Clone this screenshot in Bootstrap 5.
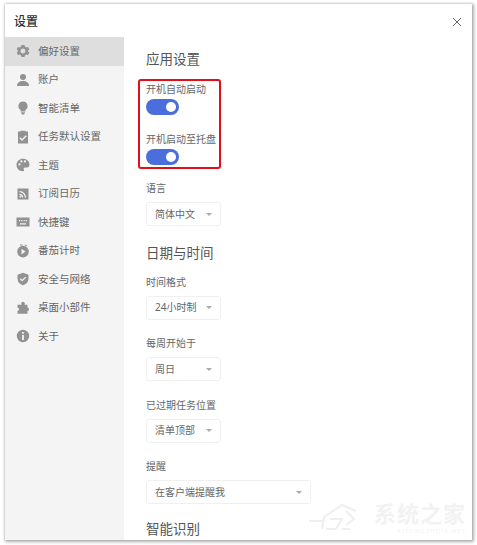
<!DOCTYPE html>
<html lang="zh">
<head>
    <meta charset="UTF-8">
    <meta name="viewport" content="width=device-width, initial-scale=1.0">
    <title>设置</title>
    <link href="https://cdn.jsdelivr.net/npm/bootstrap@5.3.0/dist/css/bootstrap.min.css" rel="stylesheet">
    <style>
        html, body { height: 100%; }
        body {
            background-color: #fff;
            font-family: "Noto Sans", "Noto Sans CJK SC", sans-serif;
            overflow: hidden;
            padding: 4px 5px 5px 5px;
        }
        .settings-win {
            height: 536px;
            background: #fff;
            box-shadow: 1px 1px 3px 1px rgba(0, 0, 0, 0.3), 0 0 2px rgba(0, 0, 0, 0.15);
            overflow: hidden;
            position: relative;
        }
        .win-head {
            height: 33px;
            padding-left: 9px;
            padding-right: 10px;
            padding-top: 2px;
        }
        .win-title { font-size: 12px; color: #333; font-weight: 500; }
        .win-body { height: 503px; }
        .side {
            width: 119px;
            background: #f4f4f4;
            flex-shrink: 0;
        }
        .side-item {
            height: 28.5px;
            padding-left: 11px;
            padding-top: 1px;
            gap: 8px;
            font-size: 10.5px;
            color: #666;
        }
        .side-item.on { background: #dedede; }
        .side-item svg { width: 14px; height: 14px; fill: #929292; flex-shrink: 0; margin-top: -1px; }
        .main-pane { padding: 12px 0 0 22px; overflow: hidden; }
        .sec-title { font-size: 13.5px; line-height: 20px; color: #555; font-weight: 400; margin: 0; }
        .field-label { font-size: 10px; line-height: 14px; color: #666; margin: 0 0 7px 0; }
        .hl-box {
            border: 2px solid #e0101a;
            border-radius: 3px;
            width: 83px;
            height: 90px;
            margin: 10px 0 12px -8px;
            padding: 1px 0 0 6px;
        }
        .hl-box .field-label { margin-bottom: 3px; white-space: nowrap; }
        .tgl {
            width: 33px;
            height: 16px;
            background: #4a6fdc;
            border-radius: 8px;
            padding: 0 3px;
            margin-bottom: 17px;
        }
        .tgl span { width: 10px; height: 10px; background: #fff; border-radius: 50%; }
        .pick {
            width: 75px;
            height: 24px;
            padding: 0 8px;
            font-size: 10px;
            color: #666;
            background: #fff;
            border: 1px solid #f0f0f0;
            border-radius: 3px;
            margin-bottom: 16.5px;
        }
        .pick.dropdown-toggle::after {
            border-top: 3px solid #aaa;
            border-left: 3px solid transparent;
            border-right: 3px solid transparent;
            border-bottom: 0;
            margin-left: 0;
        }
        .pick.wide { width: 165px; margin-bottom: 15px; }
        .date-title { margin-bottom: 12px; }
        .wm {
            position: absolute;
            right: 6px;
            bottom: 5px;
            color: #f2f2f2;
            pointer-events: none;
        }
        .wm-text { font-size: 22px; line-height: 28px; letter-spacing: 1px; font-weight: 700; }
        .wm-sub { font-size: 6px; line-height: 8px; letter-spacing: 1px; text-align: right; }
    </style>
</head>
<body>

<div class="settings-win d-flex flex-column">
    <div class="win-head d-flex align-items-center justify-content-between">
        <span class="win-title">设置</span>
        <svg width="10" height="10" viewBox="0 0 10 10"><path d="M1 1l8 8M9 1l-8 8" stroke="#666" stroke-width="1" fill="none"/></svg>
    </div>
    <div class="win-body d-flex">
        <div class="side d-flex flex-column">
            <div class="side-item on d-flex align-items-center">
                <svg viewBox="0 0 14 14"><path fill-rule="evenodd" d="M5.6 1h2.800l.5 1.600 1.500.8 1.600-.5 1.300 2.400-1.200 1.100v1.200l1.200 1.100-1.300 2.400-1.600-.5-1.500.8-.5 1.600H5.600l-.5-1.600-1.500-.8-1.600.5L.7 8.700l1.200-1.100V6.400L.7 5.300 2 2.900l1.600.5 1.500-.8zM7 4.500a2.500 2.500 0 1 0 0 5 2.500 2.500 0 0 0 0-5z"/></svg>
                <span>偏好设置</span>
            </div>
            <div class="side-item d-flex align-items-center">
                <svg viewBox="0 0 14 14"><circle cx="7" cy="4" r="3"/><path d="M1 13c0-3.500 2.500-5 6-5s6 1.500 6 5z"/></svg>
                <span>账户</span>
            </div>
            <div class="side-item d-flex align-items-center">
                <svg viewBox="0 0 14 14"><path d="M7 .5a4.600 4.600 0 0 0-2.400 8.500v1.500h4.800V9A4.600 4.600 0 0 0 7 .5zM5 11.300h4l-.8 2.200H5.800z"/></svg>
                <span>智能清单</span>
            </div>
            <div class="side-item d-flex align-items-center">
                <svg viewBox="0 0 14 14"><path fill-rule="evenodd" d="M2 1.500h2.500V.8h5v.7H12v12H2zM4.200 7.300l-.9.900 2.700 2.700 4.700-4.700-.9-.9L6 9.100z"/></svg>
                <span>任务默认设置</span>
            </div>
            <div class="side-item d-flex align-items-center">
                <svg viewBox="0 0 14 14"><path fill-rule="evenodd" d="M7 .8C3.300.8.500 3.500.500 7s2.800 6.200 6.300 6.200c1.300 0 1.500-1 1-1.800-.6-1 0-2 1.200-2h2c1.500 0 2.500-1 2.500-2.600C13.500 3.300 10.700.8 7 .8zM3.500 7.500a1.100 1.100 0 1 1 0-2.200 1.100 1.100 0 0 1 0 2.200zM5.500 4.500a1.100 1.100 0 1 1 0-2.200 1.100 1.100 0 0 1 0 2.200zM9 4.500a1.100 1.100 0 1 1 0-2.200 1.100 1.100 0 0 1 0 2.200z"/></svg>
                <span>主题</span>
            </div>
            <div class="side-item d-flex align-items-center">
                <svg viewBox="0 0 14 14"><path fill-rule="evenodd" d="M1.500 1.500h11v11h-11zM3.500 4v1.300c3 0 5.200 2.200 5.200 5.200H10C10 6.900 7.100 4 3.500 4zM3.500 6.700V8c1.400 0 2.500 1.100 2.500 2.500h1.300c0-2.100-1.700-3.800-3.800-3.800zM4.400 8.800a.9.900 0 1 0 0 1.800.9.900 0 0 0 0-1.800z"/></svg>
                <span>订阅日历</span>
            </div>
            <div class="side-item d-flex align-items-center">
                <svg viewBox="0 0 14 14"><path fill-rule="evenodd" d="M.5 2.500h13v9H.500zM3 5v1.200h1.200V5zM5.200 5v1.200h1.200V5zM7.600 5v1.200h1.200V5zM9.800 5v1.200H11V5zM4 8.200v1.200h6V8.200z"/></svg>
                <span>快捷键</span>
            </div>
            <div class="side-item d-flex align-items-center">
                <svg viewBox="0 0 14 14"><path fill-rule="evenodd" d="M7 1.800a5.800 5.800 0 1 0 0 11.600A5.800 5.800 0 0 0 7 1.800zM5.500 4.800l4 2.800-4 2.800zM4 .5h2.500v1H4zM9 .5l2.200 1.300-.5.800-2.200-1.300z"/></svg>
                <span>番茄计时</span>
            </div>
            <div class="side-item d-flex align-items-center">
                <svg viewBox="0 0 14 14"><path fill-rule="evenodd" d="M7 .8l5.500 1.900v4.100c0 3-2.200 5.400-5.500 6.500-3.300-1.100-5.500-3.500-5.500-6.500V2.700zM4.700 6.300l-.9.900 2.400 2.400 4-4-.9-.9-3.100 3.100z"/></svg>
                <span>安全与网络</span>
            </div>
            <div class="side-item d-flex align-items-center">
                <svg viewBox="0 0 14 14"><path d="M5.200 2.600a1.800 1.800 0 1 1 3.600 0c0 .5-.2.800-.4 1.100h3.100v3.100h1.300v3h-1.300v3h-10v-3c.8 0 1.600-.6 1.600-1.500s-.8-1.500-1.600-1.500V3.700h4.100c-.2-.3-.4-.6-.4-1.100z"/></svg>
                <span>桌面小部件</span>
            </div>
            <div class="side-item d-flex align-items-center">
                <svg viewBox="0 0 14 14"><path fill-rule="evenodd" d="M7 .8a6.200 6.200 0 1 0 0 12.400A6.200 6.200 0 0 0 7 .8zM6.100 3h1.800v1.800H6.100zM6.100 6h1.800v5H6.100z"/></svg>
                <span>关于</span>
            </div>
        </div>

        <div class="main-pane flex-grow-1">
            <h5 class="sec-title">应用设置</h5>
            <div class="hl-box">
                <p class="field-label">开机自动启动</p>
                <div class="tgl d-flex align-items-center justify-content-end"><span class="d-block"></span></div>
                <p class="field-label">开机启动至托盘</p>
                <div class="tgl d-flex align-items-center justify-content-end"><span class="d-block"></span></div>
            </div>

            <p class="field-label">语言</p>
            <button type="button" class="pick btn dropdown-toggle d-flex align-items-center justify-content-between">简体中文</button>

            <h5 class="sec-title date-title">日期与时间</h5>
            <p class="field-label">时间格式</p>
            <button type="button" class="pick btn dropdown-toggle d-flex align-items-center justify-content-between">24小时制</button>
            <p class="field-label">每周开始于</p>
            <button type="button" class="pick btn dropdown-toggle d-flex align-items-center justify-content-between">周日</button>
            <p class="field-label">已过期任务位置</p>
            <button type="button" class="pick btn dropdown-toggle d-flex align-items-center justify-content-between">清单顶部</button>
            <p class="field-label">提醒</p>
            <button type="button" class="pick wide btn dropdown-toggle d-flex align-items-center justify-content-between">在客户端提醒我</button>
            <h5 class="sec-title">智能识别</h5>
        </div>
    </div>
    <div class="wm d-flex align-items-end gap-1">
        <svg width="62" height="40" viewBox="0 0 62 40" fill="none" stroke="#efefef" stroke-width="2"><path d="M1 26h14M14 34l2-12 18-12 14 6M22 24h12l-6 10H18M38 16l8 8-8 6M34 34h8"/></svg>
        <div>
            <div class="wm-text">系统之家</div>
            <div class="wm-sub">XITONGZHIJIA.NET</div>
        </div>
    </div>
</div>

</body>
</html>
